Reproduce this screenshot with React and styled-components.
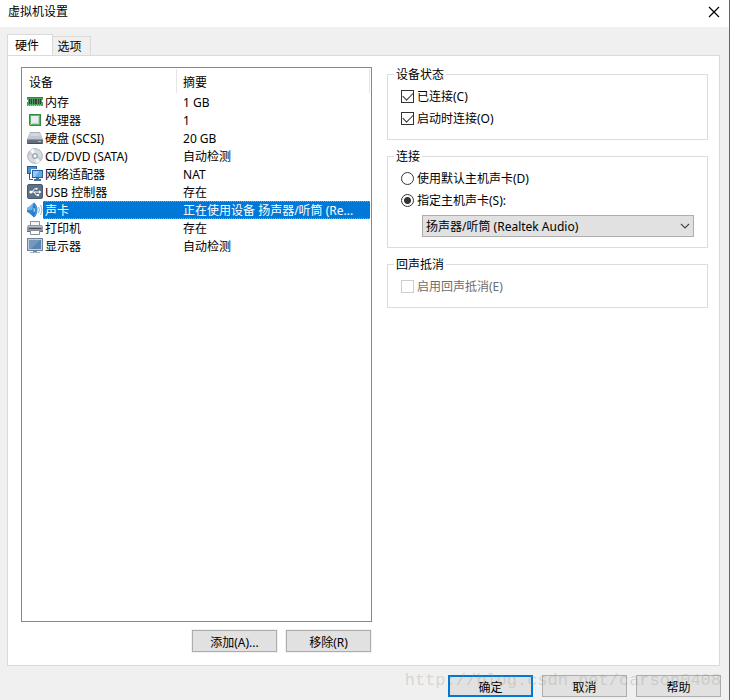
import { useState } from "react";
import styled, { createGlobalStyle } from "styled-components";

const dispositivos = [
    { id: "memory", nome: "内存", resumo: "1 GB", Icone: IconeMemoria },
    { id: "cpu", nome: "处理器", resumo: "1", Icone: IconeProcessador },
    { id: "disk", nome: "硬盘 (SCSI)", resumo: "20 GB", Icone: IconeDisco },
    { id: "cd", nome: "CD/DVD (SATA)", resumo: "自动检测", Icone: IconeCd },
    { id: "network", nome: "网络适配器", resumo: "NAT", Icone: IconeRede },
    { id: "usb", nome: "USB 控制器", resumo: "存在", Icone: IconeUsb },
    { id: "sound", nome: "声卡", resumo: "正在使用设备 扬声器/听筒 (Re...", Icone: IconeSom },
    { id: "printer", nome: "打印机", resumo: "存在", Icone: IconeImpressora },
    { id: "display", nome: "显示器", resumo: "自动检测", Icone: IconeMonitor },
];

export default function App() {
    const [selecionado, setSelecionado] = useState("sound");
    const [placa, setPlaca] = useState("especifica");

    return (
        <>
            <EstiloGlobal />
            <Janela>
                <BarraTitulo>
                    <Titulo>虚拟机设置</Titulo>
                    <BotaoFechar aria-label="关闭">
                        <svg width="12" height="12" viewBox="0 0 12 12">
                            <path d="M1 1L11 11M11 1L1 11" stroke="#000" strokeWidth="1.2" />
                        </svg>
                    </BotaoFechar>
                </BarraTitulo>
                <Abas role="tablist">
                    <Aba role="tab" aria-selected="true" $ativa>硬件</Aba>
                    <Aba role="tab" aria-selected="false">选项</Aba>
                </Abas>
                <Painel>
                    <ColunaLista>
                        <Lista>
                            <Tabela>
                                <colgroup>
                                    <col width="21" />
                                    <col width="134" />
                                    <col />
                                </colgroup>
                                <thead>
                                    <tr>
                                        <Cabecalho colSpan="2"><span>设备</span></Cabecalho>
                                        <Cabecalho><span>摘要</span></Cabecalho>
                                    </tr>
                                </thead>
                                <tbody>
                                    {dispositivos.map(({ id, nome, resumo, Icone }) => (
                                        <Linha key={id} $ativa={id === selecionado} onClick={() => setSelecionado(id)}>
                                            <CelulaIcone><Icone /></CelulaIcone>
                                            <CelulaNome>{nome}</CelulaNome>
                                            <CelulaResumo>{resumo}</CelulaResumo>
                                        </Linha>
                                    ))}
                                </tbody>
                            </Tabela>
                        </Lista>
                        <BotoesLista>
                            <Botao>添加(A)...</Botao>
                            <Botao>移除(R)</Botao>
                        </BotoesLista>
                    </ColunaLista>
                    <ColunaOpcoes>
                        <Grupo>
                            <legend>设备状态</legend>
                            <Opcao><Caixa type="checkbox" defaultChecked /><span>已连接(C)</span></Opcao>
                            <Opcao><Caixa type="checkbox" defaultChecked /><span>启动时连接(O)</span></Opcao>
                        </Grupo>
                        <Grupo>
                            <legend>连接</legend>
                            <Opcao>
                                <Radio type="radio" name="placa" checked={placa === "padrao"} onChange={() => setPlaca("padrao")} />
                                <span>使用默认主机声卡(D)</span>
                            </Opcao>
                            <Opcao>
                                <Radio type="radio" name="placa" checked={placa === "especifica"} onChange={() => setPlaca("especifica")} />
                                <span>指定主机声卡(S):</span>
                            </Opcao>
                            <CampoSelecao>
                                <Selecao aria-label="指定主机声卡">
                                    <option>扬声器/听筒 (Realtek Audio)</option>
                                </Selecao>
                                <svg width="10" height="6" viewBox="0 0 10 6">
                                    <path d="M1 1L5 5L9 1" fill="none" stroke="#444" strokeWidth="1.1" />
                                </svg>
                            </CampoSelecao>
                        </Grupo>
                        <Grupo>
                            <legend>回声抵消</legend>
                            <Opcao $inativa><Caixa type="checkbox" disabled /><span>启用回声抵消(E)</span></Opcao>
                        </Grupo>
                    </ColunaOpcoes>
                </Painel>
                <Rodape>
                    <Botao $principal>确定</Botao>
                    <Botao>取消</Botao>
                    <Botao>帮助</Botao>
                    <MarcaDagua>http://blog.csdn.net/carson0408</MarcaDagua>
                </Rodape>
            </Janela>
        </>
    );
}

function IconeMemoria() {
    return (
        <Desenho viewBox="0 0 16 16">
            <path d="M0 3H16V6H15V8H16V12H0V8H1V6H0Z" fill="#45a558" />
            <path d="M0 3H16V4H0Z" fill="#2b8a3f" />
            <path d="M2 5H5V10H2ZM6 5H10V10H6ZM11 5H14V10H11Z" fill="#34423a" />
            <path d="M3 5H4V10H3ZM7 5H8V10H7ZM12 5H13V10H12Z" fill="#66736b" />
            <path d="M1 11.5H15" stroke="#e3c65c" strokeDasharray="1 1" />
        </Desenho>
    );
}

function IconeProcessador() {
    return (
        <Desenho viewBox="0 0 16 16">
            <rect x="2.5" y="2.5" width="11" height="11" fill="#52b869" stroke="#2c8f45" />
            <rect x="4" y="4" width="8" height="8" fill="#ececee" />
            <path d="M5 11.5H11.5V5" fill="none" stroke="#c9cccb" />
            <path d="M2 14L4 12" stroke="#d7c05d" />
        </Desenho>
    );
}

function IconeDisco() {
    return (
        <Desenho viewBox="0 0 16 16">
            <path d="M3 2H13L16 9H0Z" fill="#c2c8cf" />
            <path d="M4 3H12L13 6H3Z" fill="#d3d8dd" />
            <path d="M3 2.5H13" stroke="#a7afb8" />
            <rect y="9" width="16" height="5" fill="#65707c" />
            <path d="M0 9.5H16" stroke="#8c97a3" />
            <rect x="11" y="11" width="3" height="1" fill="#7fdc79" />
            <path d="M1 13.5H15" stroke="#434d58" />
        </Desenho>
    );
}

function IconeCd() {
    return (
        <Desenho viewBox="0 0 16 16">
            <circle cx="8" cy="8" r="7.4" fill="#d6dae1" stroke="#a0a6b0" strokeWidth=".8" />
            <path d="M8 8L3 2.5A7 7 0 0 1 7 1ZM8 8L13 13.5A7 7 0 0 1 9 15Z" fill="#f7f8fa" />
            <path d="M8 8L1 6A7 7 0 0 1 2 4ZM8 8L15 10A7 7 0 0 1 14 12Z" fill="#c4cad3" />
            <circle cx="8" cy="8" r="2.6" fill="#bcc4d0" stroke="#929baa" strokeWidth=".8" />
            <circle cx="8" cy="8" r="1.2" fill="#fff" />
        </Desenho>
    );
}

function IconeRede() {
    return (
        <Desenho viewBox="0 0 16 16">
            <rect x=".5" y=".5" width="9" height="7" fill="#4b8fd0" stroke="#28598a" />
            <path d="M2.5 8V13.5H6" fill="none" stroke="#28598a" />
            <rect x="4.5" y="3.5" width="11" height="8" fill="none" stroke="#f1f7fc" />
            <rect x="5.5" y="4.5" width="10" height="7" fill="#64aae6" stroke="#286097" />
            <path d="M6 5H12L8 11H6Z" fill="#94caf4" />
            <path d="M9 12H12V13H14V15H7V13H9Z" fill="#4b7196" />
        </Desenho>
    );
}

function IconeUsb() {
    return (
        <Desenho viewBox="0 0 16 16">
            <rect x=".5" y=".5" width="15" height="14" rx="1.5" fill="#5b7188" stroke="#465b71" />
            <path d="M3 8H13M5 8L7.5 4.8H9.5M7 8L9 11H10.5" fill="none" stroke="#fff" />
            <circle cx="3.8" cy="8" r="1.5" fill="#fff" />
            <path d="M12 6.2L14.5 8L12 9.8Z" fill="#fff" />
            <circle cx="9.7" cy="4.8" r="1" fill="#fff" />
            <rect x="10" y="10" width="2" height="2" fill="#fff" />
        </Desenho>
    );
}

function IconeSom() {
    return (
        <Desenho viewBox="0 0 16 16">
            <path d="M0 6L2 5L7 .5V15.5L2 11L0 10Z" fill="#2b86d0" />
            <path d="M2.5 4.6L7 .5V8H0V6Z" fill="#6bb5ea" />
            <path d="M7 .5Q10.4 3 10.4 8T7 15.5Q5.4 12 5.4 8T7 .5Z" fill="#2478c4" />
            <path d="M7.4 2.5Q9.4 5 9.4 8T7.4 13.5" fill="none" stroke="#4da0e0" />
            <path d="M6.5 5.5Q8.3 6 8.3 8T6.5 10.5Z" fill="#9acdf2" />
            <path d="M11.6 5Q13.2 8 11.6 11M13.6 3Q16.4 8 13.6 13" fill="none" stroke="#85b9df" />
        </Desenho>
    );
}

function IconeImpressora() {
    return (
        <Desenho viewBox="0 0 16 16">
            <path d="M3.5 6V1.5H12.5V6" fill="#f5f6f8" stroke="#8d949f" />
            <path d="M1 5H15L16 7V12H0V7Z" fill="#9097a2" />
            <path d="M1 6.5H15" stroke="#b9bec6" />
            <path d="M2 8.5H14" stroke="#4a515c" />
            <path d="M0 11.5H16" stroke="#666d78" />
            <path d="M3.5 10.5H12.5V14.5H3.5Z" fill="#fff" stroke="#8a919c" />
        </Desenho>
    );
}

function IconeMonitor() {
    return (
        <Desenho viewBox="0 0 16 16">
            <rect x=".5" y=".5" width="15" height="12" fill="#c3d0dc" stroke="#6d8296" />
            <rect x="2" y="2" width="12" height="9" fill="#5a83ad" />
            <path d="M2 2H13L4 11H2Z" fill="#7599bd" />
            <path d="M6 13H10V14H6Z" fill="#7c8fa1" />
            <path d="M3 14H13V15H3Z" fill="#a3b0bd" />
        </Desenho>
    );
}

const EstiloGlobal = createGlobalStyle`
    * {
        box-sizing: border-box;
    }

    body {
        margin: 0;
        background: #f0f0f0;
    }

    body, button, select, input {
        font-family: "Noto Sans", "Noto Sans CJK SC", sans-serif;
        font-size: 12px;
        line-height: 18px;
        color: #000;
    }
`

const Janela = styled.main`
    min-height: 100vh;
    display: flex;
    flex-direction: column;
    border-right: 1px solid #1a78c8;
`

const BarraTitulo = styled.header`
    height: 27px;
    padding: 0 9px 4px 8px;
    display: flex;
    align-items: center;
    justify-content: space-between;
    background: #fff;
`

const Titulo = styled.h1`
    margin: 0;
    font-size: 12px;
    font-weight: 400;
`

const BotaoFechar = styled.button`
    display: flex;
    padding: 0;
    border: none;
    background: none;
`

const Abas = styled.div`
    display: flex;
    align-items: flex-end;
    padding: 7px 7px 0;
`

const Aba = styled.button`
    width: ${(p) => (p.$ativa ? 46 : 38)}px;
    height: ${(p) => (p.$ativa ? 22 : 19)}px;
    margin-bottom: ${(p) => (p.$ativa ? -1 : 0)}px;
    padding: ${(p) => (p.$ativa ? "0 6px 0 0" : "2px 4px 0 0")};
    line-height: 16px;
    border: 1px solid #dadada;
    border-bottom: none;
    border-left-width: ${(p) => (p.$ativa ? 1 : 0)}px;
    background: ${(p) => (p.$ativa ? "#fff" : "#f0f0f0")};
`

const Painel = styled.section`
    flex: 1;
    display: grid;
    grid-template-columns: 351fr 321fr;
    gap: 15px;
    margin: 0 9px 0 7px;
    padding: 11px 11px 13px 13px;
    border: 1px solid #dadada;
    background: #fff;
`

const ColunaLista = styled.div`
    min-width: 0;
    display: flex;
    flex-direction: column;
    gap: 8px;
`

const Lista = styled.div`
    flex: 1;
    padding: 1px 1px 0 0;
    border: 1px solid #828790;
`

const Tabela = styled.table`
    width: 100%;
    table-layout: fixed;
    border-collapse: collapse;
    cursor: default;

    td {
        padding: 0;
        height: 18px;
        line-height: 16px;
        white-space: nowrap;
        overflow: hidden;
        text-overflow: ellipsis;
    }
`

const Cabecalho = styled.th`
    height: 24px;
    padding: 0;
    font-weight: 400;
    text-align: left;
    vertical-align: top;

    span {
        display: block;
        height: 24px;
        padding: 5px 0 0 7px;
        border-right: 1px solid #e5e5e5;
    }

    & + & span {
        padding-left: 6px;
    }
`

const CelulaIcone = styled.td`
    && {
        padding-left: 5px;
        background: #fff;
    }
`

const CelulaNome = styled.td`
    && {
        padding: 2px 0 0 2px;
    }
`

const CelulaResumo = styled.td`
    && {
        padding: 2px 6px 0;
    }
`

const Linha = styled.tr`
    color: ${(p) => (p.$ativa ? "#fff" : "#000")};
    background: ${(p) => (p.$ativa ? "#0078d7" : "transparent")};

    ${CelulaNome}, ${CelulaResumo} {
        background: ${(p) => (p.$ativa ? "linear-gradient(90deg, #ff8728 50%, transparent 50%) 0 0 / 2px 1px repeat-x, linear-gradient(90deg, #ff8728 50%, transparent 50%) 0 100% / 2px 1px repeat-x" : "none")};
    }
`

const Desenho = styled.svg`
    display: block;
    width: 16px;
    height: 16px;
`

const BotoesLista = styled.div`
    display: flex;
    justify-content: flex-end;
    gap: 9px;
    padding-right: 1px;
`

const Botao = styled.button`
    width: 85px;
    height: 22px;
    padding: 4px 0 0;
    line-height: 14px;
    border: ${(p) => (p.$principal ? "2px solid #0078d7" : "1px solid #adadad")};
    background: #e1e1e1;
    box-shadow: 0 0 0 1px #f0f0f0;
`

const ColunaOpcoes = styled.div`
    min-width: 0;
    display: flex;
    flex-direction: column;
    gap: 9px;
`

const Grupo = styled.fieldset`
    min-width: 0;
    margin: 0;
    padding: 4px 13px 10px;
    border: 1px solid #dcdcdc;

    legend {
        margin-left: -7px;
        padding: 2px 2px 0;
        line-height: 12px;
    }
`

const Opcao = styled.label`
    height: 22px;
    display: flex;
    align-items: center;
    gap: 3px;
    color: ${(p) => (p.$inativa ? "#6d6d6d" : "#000")};

    span {
        padding-top: 2px;
    }
`

const Controle = styled.input`
    appearance: none;
    flex: none;
    width: 13px;
    height: 13px;
    margin: 0;
    border: 1px solid #333;
    background: #fff;

    &:disabled {
        border-color: #ccc;
    }
`

const Caixa = styled(Controle)`
    display: grid;
    place-items: center;

    &:checked::before {
        content: "";
        width: 9px;
        height: 5px;
        margin-bottom: 3px;
        border: solid #333;
        border-width: 0 0 1px 1px;
        transform: rotate(-45deg);
    }
`

const Radio = styled(Controle)`
    border-radius: 50%;

    &:checked {
        background: radial-gradient(circle, #333 3px, #fff 4px);
    }
`

const CampoSelecao = styled.div`
    display: grid;
    align-items: center;
    margin: 4px 0 0 21px;

    > * {
        grid-area: 1 / 1;
    }

    svg {
        justify-self: end;
        margin-right: 4px;
        pointer-events: none;
    }
`

const Selecao = styled.select`
    appearance: none;
    width: 100%;
    height: 22px;
    padding: 2px 20px 0 3px;
    border: 1px solid #adadad;
    border-radius: 0;
    background: #e1e1e1;
`

const Rodape = styled.footer`
    position: relative;
    display: flex;
    justify-content: flex-end;
    gap: 9px;
    padding: 9px 8px 3px;
`

const MarcaDagua = styled.span`
    position: absolute;
    top: 5px;
    right: 8px;
    font-family: "Liberation Mono", monospace;
    font-size: 17px;
    line-height: 20px;
    color: rgba(150, 150, 135, 0.3);
    pointer-events: none;
`
